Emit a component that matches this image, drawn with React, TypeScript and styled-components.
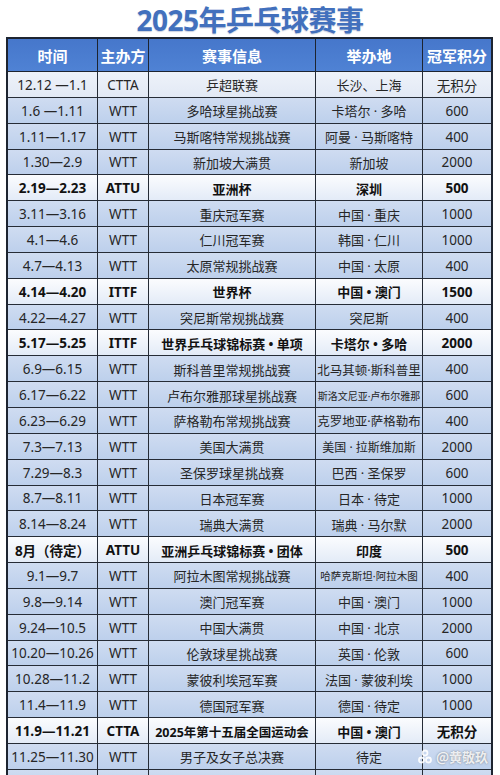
import React from "react";
import styled, { createGlobalStyle, css } from "styled-components";

const GlobalStyle = createGlobalStyle`
  html, body {
    margin: 0;
    padding: 0;
    background: #ffffff;
    font-family: "Noto Sans", "Noto Sans CJK SC", sans-serif;
    overflow: hidden;
  }
  * { box-sizing: border-box; }
`;

const Page = styled.div`
  position: relative;
  width: 500px;
  height: 775px;
  overflow: hidden;
  background: #ffffff;
`;

const Title = styled.h1`
  margin: 0;
  height: 37px;
  display: flex;
  align-items: center;
  justify-content: center;
  font-family: "Noto Sans", "Noto Sans CJK SC", sans-serif;
  font-size: 28px;
  font-weight: 700;
  letter-spacing: -0.5px;
  color: #4270bd;
  text-shadow: 0 1px 1px rgba(40, 70, 130, 0.25);
  padding-top: 1px;
`;

const Table = styled.div`
  margin: 0 7px 0 6px;
  width: 487px;
  border: 2px solid #1d2430;
  border-bottom: none;
  display: flex;
  flex-direction: column;
`;

const COLS = "90px 51px 167px 107px 1fr";

const HeaderRow = styled.div`
  display: grid;
  grid-template-columns: ${COLS};
  height: 33px;
  background: linear-gradient(#4677cb, #4f82d4);
  border-bottom: 1px solid #1d2430;
`;

const HeaderCell = styled.div`
  display: flex;
  align-items: center;
  justify-content: center;
  color: #ffffff;
  font-family: "Noto Sans CJK SC", sans-serif;
  font-weight: 700;
  font-size: 15px;
  border-right: 1px solid #1d2430;
  &:last-child { border-right: none; }
`;

type Variant = "blue" | "light" | "bold";

const Row = styled.div<{ $variant: Variant }>`
  display: grid;
  grid-template-columns: ${COLS};
  height: 25.85px;
  border-bottom: 1px solid #262c36;
  color: #262626;
  ${(p) =>
    p.$variant === "bold"
      ? css`
          background: linear-gradient(#fbfcfe, #e3ebf7);
          font-weight: 700;
          color: #111;
        `
      : p.$variant === "light"
      ? css`
          background: linear-gradient(#eef2f9, #e2e9f5);
        `
      : css`
          background: linear-gradient(#cfdcf1, #bdd0ec);
        `}
`;

const Cell = styled.div<{ $size?: number }>`
  display: flex;
  align-items: center;
  justify-content: center;
  white-space: nowrap;
  overflow: hidden;
  font-size: ${(p) => p.$size ?? 13}px;
  font-family: "Noto Sans", "Noto Sans CJK SC", sans-serif;
  border-right: 1px solid #262c36;
  padding-top: 1px;
  &:last-child { border-right: none; }
`;

const Watermark = styled.div`
  position: absolute;
  right: 12px;
  top: 747px;
  display: flex;
  align-items: center;
  gap: 3px;
  color: rgba(255, 255, 255, 0.85);
  font-family: "Noto Sans CJK SC", sans-serif;
  font-size: 13px;
  font-weight: 700;
  text-shadow: 0 0 2px rgba(90, 90, 90, 0.7);
`;

type Ev = {
  date: string;
  org: string;
  name: string;
  place: string;
  pts: string;
  v: Variant;
  nameSize?: number;
  placeSize?: number;
};

const events: Ev[] = [
  { date: "12.12 —1.1", org: "CTTA", name: "乒超联赛", place: "长沙、上海", pts: "无积分", v: "light" },
  { date: "1.6 —1.11", org: "WTT", name: "多哈球星挑战赛", place: "卡塔尔 · 多哈", pts: "600", v: "blue" },
  { date: "1.11—1.17", org: "WTT", name: "马斯喀特常规挑战赛", place: "阿曼 · 马斯喀特", pts: "400", v: "blue" },
  { date: "1.30—2.9", org: "WTT", name: "新加坡大满贯", place: "新加坡", pts: "2000", v: "blue" },
  { date: "2.19—2.23", org: "ATTU", name: "亚洲杯", place: "深圳", pts: "500", v: "bold" },
  { date: "3.11—3.16", org: "WTT", name: "重庆冠军赛", place: "中国 · 重庆", pts: "1000", v: "blue" },
  { date: "4.1—4.6", org: "WTT", name: "仁川冠军赛", place: "韩国 · 仁川", pts: "1000", v: "blue" },
  { date: "4.7—4.13", org: "WTT", name: "太原常规挑战赛", place: "中国 · 太原", pts: "400", v: "blue" },
  { date: "4.14—4.20", org: "ITTF", name: "世界杯", place: "中国 • 澳门", pts: "1500", v: "bold" },
  { date: "4.22—4.27", org: "WTT", name: "突尼斯常规挑战赛", place: "突尼斯", pts: "400", v: "blue" },
  { date: "5.17—5.25", org: "ITTF", name: "世界乒乓球锦标赛 • 单项", place: "卡塔尔 • 多哈", pts: "2000", v: "bold" },
  { date: "6.9—6.15", org: "WTT", name: "斯科普里常规挑战赛", place: "北马其顿·斯科普里", pts: "400", v: "blue", placeSize: 12.5 },
  { date: "6.17—6.22", org: "WTT", name: "卢布尔雅那球星挑战赛", place: "斯洛文尼亚·卢布尔雅那", pts: "600", v: "blue", placeSize: 10 },
  { date: "6.23—6.29", org: "WTT", name: "萨格勒布常规挑战赛", place: "克罗地亚·萨格勒布", pts: "400", v: "blue", placeSize: 12.5 },
  { date: "7.3—7.13", org: "WTT", name: "美国大满贯", place: "美国 · 拉斯维加斯", pts: "2000", v: "blue", placeSize: 12 },
  { date: "7.29—8.3", org: "WTT", name: "圣保罗球星挑战赛", place: "巴西 · 圣保罗", pts: "600", v: "blue" },
  { date: "8.7—8.11", org: "WTT", name: "日本冠军赛", place: "日本 · 待定", pts: "1000", v: "blue" },
  { date: "8.14—8.24", org: "WTT", name: "瑞典大满贯", place: "瑞典 · 马尔默", pts: "2000", v: "blue" },
  { date: "8月（待定）", org: "ATTU", name: "亚洲乒乓球锦标赛 • 团体", place: "印度", pts: "500", v: "bold" },
  { date: "9.1—9.7", org: "WTT", name: "阿拉木图常规挑战赛", place: "哈萨克斯坦·阿拉木图", pts: "400", v: "blue", placeSize: 10.5 },
  { date: "9.8—9.14", org: "WTT", name: "澳门冠军赛", place: "中国 · 澳门", pts: "1000", v: "blue" },
  { date: "9.24—10.5", org: "WTT", name: "中国大满贯", place: "中国 · 北京", pts: "2000", v: "blue" },
  { date: "10.20—10.26", org: "WTT", name: "伦敦球星挑战赛", place: "英国 · 伦敦", pts: "600", v: "blue" },
  { date: "10.28—11.2", org: "WTT", name: "蒙彼利埃冠军赛", place: "法国 · 蒙彼利埃", pts: "1000", v: "blue" },
  { date: "11.4—11.9", org: "WTT", name: "德国冠军赛", place: "德国 · 待定", pts: "1000", v: "blue" },
  { date: "11.9—11.21", org: "CTTA", name: "2025年第十五届全国运动会", place: "中国 • 澳门", pts: "无积分", v: "bold", nameSize: 12.5 },
  { date: "11.25—11.30", org: "WTT", name: "男子及女子总决赛", place: "待定", pts: "", v: "blue" },
];

const headers = ["时间", "主办方", "赛事信息", "举办地", "冠军积分"];

export default function App() {
  return (
    <Page>
      <GlobalStyle />
      <Title>2025年乒乓球赛事</Title>
      <Table>
        <HeaderRow>
          {headers.map((h) => (
            <HeaderCell key={h}>{h}</HeaderCell>
          ))}
        </HeaderRow>
        {events.map((e, i) => (
          <Row key={i} $variant={e.v}>
            <Cell $size={13.5}>{e.date}</Cell>
            <Cell $size={13.5}>{e.org}</Cell>
            <Cell $size={e.nameSize ?? 13}>{e.name}</Cell>
            <Cell $size={e.placeSize ?? 13}>{e.place}</Cell>
            <Cell $size={13.5}>{e.pts}</Cell>
          </Row>
        ))}
        <Row $variant="blue">
          <Cell />
          <Cell />
          <Cell />
          <Cell />
          <Cell />
        </Row>
      </Table>
      <Watermark>
        <svg width="16" height="16" viewBox="0 0 16 16" aria-hidden="true">
          <circle cx="8" cy="4" r="2.5" fill="none" stroke="rgba(255,255,255,0.9)" strokeWidth="1.8" />
          <circle cx="4.5" cy="11" r="2.5" fill="none" stroke="rgba(255,255,255,0.9)" strokeWidth="1.8" />
          <circle cx="11.5" cy="11" r="2.5" fill="none" stroke="rgba(255,255,255,0.9)" strokeWidth="1.8" />
        </svg>
        <span>@黄敬玖</span>
      </Watermark>
    </Page>
  );
}
